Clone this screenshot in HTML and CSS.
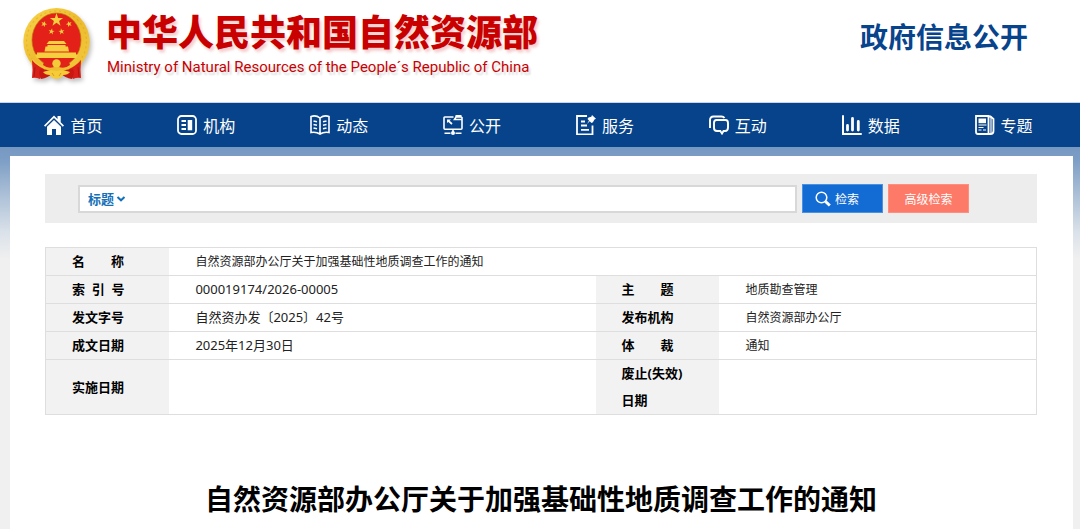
FILE: index.html
```html
<!DOCTYPE html>
<html lang="zh-CN">
<head>
<meta charset="utf-8">
<meta name="viewport" content="width=device-width, initial-scale=1">
<title>自然资源部办公厅关于加强基础性地质调查工作的通知</title>
<link rel="stylesheet" href="styles.css">
</head>
<body>
<header class="header">
  <a class="brand" href="#">
    <svg class="emblem" viewBox="0 0 80 80" aria-hidden="true">
      <defs>
        <linearGradient id="gold" x1="0" y1="0" x2="1" y2="1">
          <stop offset="0" stop-color="#f9d54b"/><stop offset=".5" stop-color="#edbb2e"/><stop offset="1" stop-color="#f3c93c"/>
        </linearGradient>
        <path id="star" d="M0-7 1.6-2.100 6.600-2.100 2.600.9 4 5.700 0 2.800-4 5.700-2.600.9-6.600-2.100-1.600-2.100Z"/>
      </defs>
      <ellipse cx="41.500" cy="36.500" rx="33.200" ry="33.500" fill="url(#gold)"/>
      <ellipse cx="41.500" cy="36.500" rx="30" ry="30.500" fill="none" stroke="#c8921d" stroke-width="1.200" stroke-dasharray="2 3" opacity=".35"/>
      <ellipse cx="41.500" cy="35" rx="24.500" ry="27" fill="#e32119" stroke="#b9780f" stroke-width=".7"/>
      <g fill="#f6cf3e">
        <use href="#star" x="41.500" y="15"/>
        <use href="#star" transform="translate(29 19) rotate(20) scale(.46)"/>
        <use href="#star" transform="translate(54 19) rotate(-20) scale(.46)"/>
        <use href="#star" transform="translate(36.500 26.500) rotate(10) scale(.46)"/>
        <use href="#star" transform="translate(46.500 26.500) rotate(-10) scale(.46)"/>
        <path d="M34 36h15l2.500 3h-20zM32.500 40h18v1.500h-18zM30.500 41.500h22.500l1 5H29.500zM22 47.500h39v2H22zM20 49.500h43l-1.500 3.500H21.500z"/>
      </g>
      <path d="M17 54Q25 63 36 63h11Q58 63 66 54l1 5-12 12H28L16 59z" fill="url(#gold)"/>
      <path d="M17 55q5 6 12 9-3 6-4 10-4-2-8-1 1-8 0-18zM66 55q-5 6-12 9 3 6 4 10 4-2 8-1-1-8 0-18z" fill="#d91f18"/>
      <path d="M25 64q8 0 13 4-5 5-12 6-3-5-1-10zM58 64q-8 0-13 4 5 5 12 6 3-5 1-10z" fill="#c91812"/>
      <path d="M29 57q8 0 10 5-6 2-11-2zM54 57q-8 0-10 5 6 2 11-2z" fill="#df241a"/>
      <circle cx="41.500" cy="58.500" r="4.200" fill="#f3ca39"/>
      <path d="M28 67q7-3 13.500-1Q48 64 55 67q-2 3-7 3-1 3-6.500 4-5.500-1-6.500-4-5 0-7-3z" fill="#f6cb38"/>
      <path d="M37 68l2 3M46 68l-2 3" stroke="#d08b20" stroke-width=".8" fill="none"/>
      <path d="M20 62l-1 10M63 62l1 10" stroke="#a01611" stroke-width=".8"/>
    </svg>
    <span class="brand-text">
      <span class="brand-cn">中华人民共和国自然资源部</span>
      <span class="brand-en">Ministry of Natural Resources of the People´s Republic of China</span>
    </span>
  </a>
  <strong class="section-name">政府信息公开</strong>
</header>
<nav class="nav" aria-label="主导航">
  <ul class="nav-list">
    <li><a href="#"><svg viewBox="0 0 20 20"><path fill="currentColor" d="M0 10.500 10 .5l3.500 3.500V1h3.200v6.200L20 10.500l-1.200 1.200L10 3 1.200 11.700zM3 11.800 10 5l7 6.800V20h-5v-6H8v6H3z"/></svg>首页</a></li>
    <li><a href="#"><svg viewBox="0 0 20 20"><rect x="1" y="1" width="18" height="18" rx="3.500" fill="none" stroke="currentColor" stroke-width="1.800"/><path d="M4.500 6h4.500M4.500 10h4.500M4.500 14h4.500" stroke="currentColor" stroke-width="1.800"/><path fill="currentColor" d="M10.700 5h4.500v10.300h-4.500z"/></svg>机构</a></li>
    <li><a href="#"><svg viewBox="0 0 20 20" fill="none" stroke="currentColor" stroke-width="1.600"><path d="M1 1.500Q6-.2 10 3q4-3.200 9-1.500v16q-5-1-9 1.500-4-2.500-9-1.500zM10 3v16"/><path d="m3.500 6 3.500.8M3.500 9.500l3.500.8M3.500 13l3.500.8M16.500 6l-3.500.8M16.500 9.500l-3.500.8M16.500 13l-3.500.8"/></svg>动态</a></li>
    <li><a href="#"><svg viewBox="0 0 20 20" fill="none" stroke="currentColor" stroke-width="1.600"><path d="M10.500 2H1.700Q1 2 1 2.700v10.600q0 1 1 1h16q1 0 1-1V2.700L18 2h-5l-1.500 2.500H19M10 14.300v3.500"/><path d="m5 5.500 4 3.500" stroke-width="1.700"/><path d="M12.500 1h6" stroke-width="2"/><path d="M1.500 18.300h6M12.500 18.300h6"/><circle cx="10" cy="18" r="2" fill="currentColor" stroke="none"/><path fill="currentColor" stroke="none" d="M4 4.500h4L4 8z"/></svg>公开</a></li>
    <li><a href="#"><svg viewBox="0 0 20 20" fill="none" stroke="currentColor" stroke-width="1.800"><path d="M11 1H1v18.500h15.500v-9"/><path d="M5 6.500h4M5 10.500h6M5 14.800h8"/><path fill="currentColor" stroke="none" d="m16 0 4 3.800-1.500.7-1.600 2.800-1.400.6-1.800-1.600L11 9l2-3.500-1.500-1.600 1-1.300 2.800-.9z"/></svg>服务</a></li>
    <li><a href="#"><svg viewBox="0 0 20 20" fill="none" stroke="currentColor" stroke-width="1.900"><path d="M1 13V5q0-3.500 3.500-3.500h8q2 0 3 1.500"/><path d="M7.500 5h9Q19 5 19 8v4.500q0 3.500-3 3.500h-1.500L13 18.500 11.300 16H8q-3 0-3-3V8q0-3 2.500-3z"/></svg>互动</a></li>
    <li><a href="#"><svg viewBox="0 0 20 20" fill="none" stroke="currentColor" stroke-linecap="round"><path stroke-width="2" d="M1 1v18h18"/><path stroke-width="2.800" d="M5.500 10.500v4.500M10.500 3.500V15M16.300 6.500V15"/></svg>数据</a></li>
    <li><a href="#"><svg viewBox="0 0 20 20" fill="none" stroke="currentColor" stroke-width="1.800"><path d="M1 1h12.500v18H3q-2 0-2-2zM13.500 19h2q3 0 3-3V4l-3-2.500h-2"/><path stroke-width="1.200" d="M16 2v17"/><path stroke-width="1.200" d="M3.500 10h8M3.500 12.500h5M3.500 15h3M8 15h3"/><path fill="currentColor" stroke="none" d="M3.500 3.500h7.500v4.700H3.500z"/></svg>专题</a></li>
  </ul>
</nav>
<main class="page">
  <form class="search" role="search">
    <div class="search-box">
      <select class="search-field" aria-label="检索范围"><option>标题</option></select>
      <svg class="chevron" viewBox="0 0 10 8" aria-hidden="true"><path d="m1.500 2 3.500 3.300L8.500 2" fill="none" stroke="currentColor" stroke-width="2"/></svg>
      <input class="search-input" type="text" aria-label="检索词">
    </div>
    <button class="btn btn-search" type="submit"><svg viewBox="0 0 16 16" aria-hidden="true"><circle cx="6.500" cy="6.500" r="5.300" fill="none" stroke="currentColor" stroke-width="1.500"/><path d="m10.500 10.500 4.300 4" stroke="currentColor" stroke-width="3"/></svg>检索</button>
    <button class="btn btn-advanced" type="button">高级检索</button>
  </form>
  <table class="info">
    <colgroup><col class="col-label"><col class="col-wide"><col class="col-label"><col></colgroup>
    <tbody>
      <tr><th scope="row">名　　称</th><td colspan="3">自然资源部办公厅关于加强基础性地质调查工作的通知</td></tr>
      <tr><th scope="row">索&nbsp; 引&nbsp; 号</th><td class="number">000019174/2026-00005</td><th scope="row">主　　题</th><td>地质勘查管理</td></tr>
      <tr><th scope="row">发文字号</th><td class="number">自然资办发〔2025〕42号</td><th scope="row">发布机构</th><td>自然资源部办公厅</td></tr>
      <tr><th scope="row">成文日期</th><td class="number">2025年12月30日</td><th scope="row">体　　裁</th><td>通知</td></tr>
      <tr><th scope="row">实施日期</th><td></td><th scope="row">废止(失效)<br>日期</th><td></td></tr>
    </tbody>
  </table>
  <h1 class="title">自然资源部办公厅关于加强基础性地质调查工作的通知</h1>
</main>
</body>
</html>
```
FILE: styles.css
```css
* { box-sizing: border-box; }

body {
  display: flex;
  flex-direction: column;
  min-height: 100vh;
  margin: 0;
  font-family: "Noto Sans", "Noto Sans CJK SC", sans-serif;
  font-size: 12px;
  color: #222;
  background: #f0f0f0;
}

a { color: inherit; text-decoration: none; }

.header {
  display: flex;
  justify-content: space-between;
  align-items: flex-start;
  padding: 5px 52px 17px 15px;
  border-bottom: 1px solid #c9d5e4;
  background: #fff;
}

.brand { display: flex; gap: 11px; }

.emblem {
  width: 80px;
  height: 80px;
  filter: drop-shadow(2px 3px 2px rgba(0, 0, 0, .25));
}

.brand-text {
  display: flex;
  flex-direction: column;
  gap: 3px;
  padding-top: 3px;
  color: #c90000;
}

.brand-cn {
  font-family: "Noto Sans CJK SC", sans-serif;
  font-size: 36px;
  font-weight: 900;
  line-height: 44px;
  text-shadow: 2px 3px 3px rgba(200, 0, 0, .2);
}

.brand-en {
  padding-left: 1px;
  font-family: Roboto, sans-serif;
  font-size: 15px;
  line-height: 24px;
  text-shadow: 2px 3px 2px rgba(0, 0, 0, .15);
}

.section-name {
  padding-top: 11px;
  font-family: "Noto Sans CJK SC", sans-serif;
  font-size: 28px;
  line-height: 40px;
  color: #08448c;
}

.nav { background: #07438a; color: #fff; }

.nav-list {
  display: grid;
  grid-template-columns: repeat(8, 1fr);
  margin: 0;
  padding: 0 10px 0 7px;
  list-style: none;
}

.nav-list a {
  display: flex;
  justify-content: center;
  align-items: center;
  gap: 6px;
  height: 44px;
  font-family: "Noto Sans CJK SC", sans-serif;
  font-size: 16px;
}

.nav-list svg { width: 20px; height: 20px; }

.page {
  flex: 1;
  padding: 18px 36px 0 35px;
  border: solid transparent;
  border-width: 9px 7px 0 10px;
  background:
    linear-gradient(#fff, #fff) padding-box,
    linear-gradient(#7798c0 0, #7c9dc5 12px, #a9bed6 46px, #dbe2ea 86px, #f0f0f0 112px) border-box;
}

.search {
  display: flex;
  align-items: center;
  gap: 5px;
  padding: 10px 68px 10px 33px;
  background: #ededed;
}

.search-box {
  display: flex;
  flex: 1;
  align-items: center;
  height: 28px;
  padding-left: 8px;
  border: 2px solid #d8d8d8;
  background: #fff;
  color: #1470b8;
}

.search-field {
  appearance: none;
  padding: 0;
  border: 0;
  background: none;
  color: inherit;
  font: bold 13px/20px "Noto Sans CJK SC", sans-serif;
}

.chevron { width: 10px; height: 8px; margin-left: 1px; }

.search-input {
  flex: 1;
  min-width: 0;
  height: 100%;
  border: 0;
  outline: 0;
  background: none;
  font: inherit;
}

.btn {
  display: flex;
  justify-content: center;
  align-items: center;
  gap: 4px;
  width: 81px;
  height: 29px;
  padding: 0;
  border: 1px solid;
  color: #fff;
  font: 12px/20px "Noto Sans CJK SC", sans-serif;
}

.btn svg { width: 16px; height: 16px; }

.btn-search {
  justify-content: flex-start;
  padding-left: 12px;
  border-color: #4b91e1;
  background: #136bd4;
}

.btn-advanced { border-color: #ff8e7e; background: #fd7968; }

.info {
  width: 100%;
  margin-top: 24px;
  border: 1px solid #dedede;
  border-collapse: collapse;
  table-layout: fixed;
  line-height: 27px;
}

.col-label { width: 12.5%; }
.col-wide { width: 43%; }

.info tr { border-bottom: 1px solid #dedede; }
.info th, .info td { padding: 0 0 0 26px; text-align: left; }
.info th { background: #f2f2f2; color: #000; font-size: 13px; }
.info .number { font-size: 13px; }

.title {
  margin: 62px 0 0;
  color: #000;
  font-family: "Noto Sans CJK SC", sans-serif;
  font-size: 28px;
  line-height: 42px;
  text-align: center;
}
```
